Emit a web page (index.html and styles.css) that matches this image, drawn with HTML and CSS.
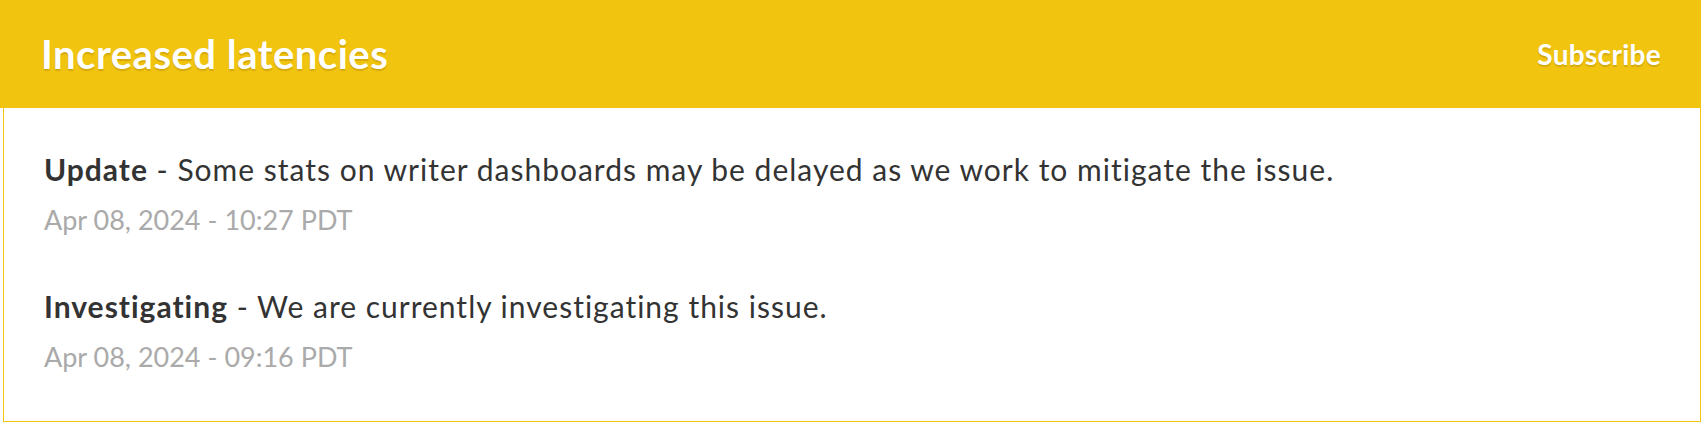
FILE: index.html
```html
<!DOCTYPE html>
<html lang="en">
<head>
<meta charset="utf-8">
<title>Increased latencies</title>
<link rel="stylesheet" href="styles.css">
</head>
<body>
<div class="incident">
  <div class="incident-header">
    <h1 class="incident-title">Increased latencies</h1>
    <a class="subscribe" href="#">Subscribe</a>
  </div>
  <div class="incident-body">
    <div class="update">
      <p class="update-text"><strong>Update</strong> - Some stats on writer dashboards may be delayed as we work to mitigate the issue.</p>
      <p class="update-time">Apr 08, 2024 - 10:27 PDT</p>
    </div>
    <div class="update">
      <p class="update-text"><strong>Investigating</strong> - We are currently investigating this issue.</p>
      <p class="update-time">Apr 08, 2024 - 09:16 PDT</p>
    </div>
  </div>
</div>
</body>
</html>
```

FILE: styles.css
```css
html, body {
  margin: 0;
  padding: 0;
  background: #ffffff;
}

body {
  font-family: Lato, "Open Sans", sans-serif;
  width: 1708px;
  height: 424px;
  overflow: hidden;
}

.incident {
  width: 1701px;
}

.incident-header {
  height: 108px;
  background: #f1c40f;
  display: flex;
  align-items: center;
  justify-content: space-between;
  padding: 0 40px 0 41px;
  box-sizing: border-box;
}

.incident-title {
  margin: 0;
  color: #ffffff;
  font-size: 40px;
  font-weight: 700;
  letter-spacing: 0.5px;
  text-shadow: 0 2px 1px rgba(150, 110, 0, 0.3);
}

.subscribe {
  color: #ffffff;
  font-size: 28px;
  font-weight: 700;
  letter-spacing: 0.3px;
  text-decoration: none;
  text-shadow: 0 2px 1px rgba(150, 110, 0, 0.3);
}

.incident-body {
  margin-left: 3px;
  height: 314px;
  box-sizing: border-box;
  border: 1px solid #f1c40f;
  border-top: none;
  padding: 38px 40px 0 40px;
}

.update {
  margin-bottom: 41px;
}

.update-text {
  margin: 0;
  font-size: 30px;
  line-height: 46px;
  letter-spacing: 1px;
  color: #333333;
}

.update-text strong {
  font-weight: 700;
}

.update-time {
  margin: 6px 0 0;
  font-size: 27px;
  line-height: 44px;
  color: #aaaaaa;
}
```
